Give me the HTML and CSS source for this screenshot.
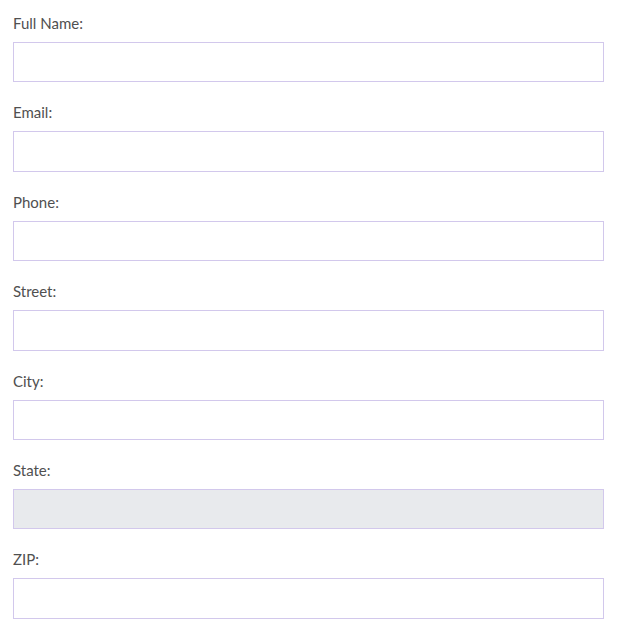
FILE: index.html
```html
<!DOCTYPE html>
<html>
<head>
<meta charset="utf-8">
<link rel="stylesheet" href="styles.css">
</head>
<body>
<form class="form">
  <div class="field"><label class="label">Full Name:</label><input class="input" type="text"></div>
  <div class="field"><label class="label">Email:</label><input class="input" type="text"></div>
  <div class="field"><label class="label">Phone:</label><input class="input" type="text"></div>
  <div class="field"><label class="label">Street:</label><input class="input" type="text"></div>
  <div class="field"><label class="label">City:</label><input class="input" type="text"></div>
  <div class="field"><label class="label">State:</label><input class="input input-disabled" type="text" disabled></div>
  <div class="field"><label class="label">ZIP:</label><input class="input" type="text"></div>
</form>
</body>
</html>
```
FILE: styles.css
```css
html, body {
  margin: 0;
  padding: 0;
  background: #ffffff;
}
body {
  font-family: "Lato", "Open Sans", sans-serif;
  color: #505050;
}
.form {
  display: flex;
  flex-direction: column;
  gap: 19px;
  padding: 12px 18px 0 13px;
}
.field {
  display: flex;
  flex-direction: column;
}
.label {
  display: block;
  font-size: 15px;
  line-height: 22px;
  height: 22px;
  margin-bottom: 8px;
}
.input {
  box-sizing: border-box;
  width: 591px;
  height: 40.4px;
  margin: 0;
  border: 1px solid #d2c8ec;
  border-radius: 0;
  background: #ffffff;
  font-family: inherit;
  font-size: 14px;
  padding: 0 10px;
  outline: none;
}
.input-disabled {
  background: #e8eaed;
}
```
